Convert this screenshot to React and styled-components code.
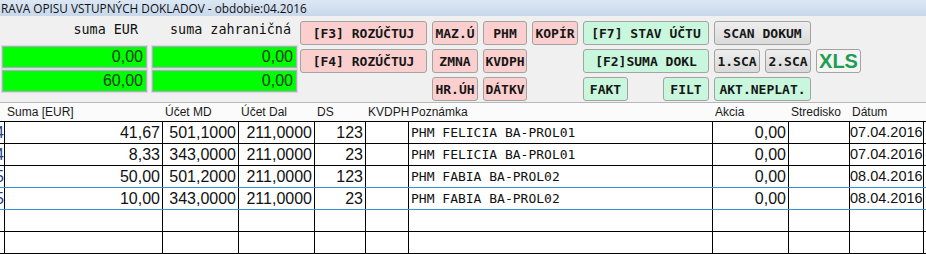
import React from 'react'
import styled, { createGlobalStyle } from 'styled-components'

const GlobalStyle = createGlobalStyle`
  html, body {
    margin: 0;
    padding: 0;
    background: #f0f0f0;
    overflow: hidden;
  }
`

const rows = [
  { id: '4', suma: '41,67', md: '501,1000', dal: '211,0000', ds: '123', note: 'PHM FELICIA BA-PROL01', akcia: '0,00', datum: '07.04.2016' },
  { id: '4', suma: '8,33', md: '343,0000', dal: '211,0000', ds: '23', note: 'PHM FELICIA BA-PROL01', akcia: '0,00', datum: '07.04.2016' },
  { id: '5', suma: '50,00', md: '501,2000', dal: '211,0000', ds: '123', note: 'PHM FABIA BA-PROL02', akcia: '0,00', datum: '08.04.2016', blue: true },
  { id: '5', suma: '10,00', md: '343,0000', dal: '211,0000', ds: '23', note: 'PHM FABIA BA-PROL02', akcia: '0,00', datum: '08.04.2016', blue: true },
  {},
  {},
]

const buttons = [
  { label: '[F3] ROZÚČTUJ', tone: 'pink', col: '1', row: 1 },
  { label: 'MAZ.Ú', tone: 'pink', col: '2', row: 1 },
  { label: 'PHM', tone: 'pink', col: '3', row: 1 },
  { label: 'KOPÍR', tone: 'pink', col: '4', row: 1 },
  { label: '[F7] STAV ÚČTU', tone: 'green', col: '5 / span 3', row: 1 },
  { label: 'SCAN DOKUM', tone: 'gray', col: '8 / span 2', row: 1 },
  { label: '[F4] ROZÚČTUJ', tone: 'pink', col: '1', row: 2 },
  { label: 'ZMNA', tone: 'pink', col: '2', row: 2 },
  { label: 'KVDPH', tone: 'pink', col: '3', row: 2 },
  { label: '[F2]SUMA DOKL', tone: 'green', col: '5 / span 3', row: 2 },
  { label: '1.SCA', tone: 'gray', col: '8', row: 2 },
  { label: '2.SCA', tone: 'gray', col: '9', row: 2 },
  { label: 'XLS', tone: 'xls', col: '10', row: 2 },
  { label: 'HR.ÚH', tone: 'pink', col: '2', row: 3 },
  { label: 'DÁTKV', tone: 'pink', col: '3', row: 3 },
  { label: 'FAKT', tone: 'green', col: '5', row: 3 },
  { label: 'FILT', tone: 'green', col: '7', row: 3 },
  { label: 'AKT.NEPLAT.', tone: 'green', col: '8 / span 2', row: 3 },
]

const tones = {
  pink: 'background: #fccfcf;',
  green: 'background: #c9f7dd;',
  gray: 'background: linear-gradient(#eeeeee, #dadada);',
  xls: `
    background: #f4f4f4;
    color: #1f9d50 !important;
    font-family: "Liberation Sans", Arial, sans-serif !important;
    font-size: 20px !important;
  `,
}

function App() {
  return (
    <Page>
      <GlobalStyle />
      <TitleBar>RAVA OPISU VSTUPNÝCH DOKLADOV - obdobie:04.2016</TitleBar>

      <Top>
        <Sums>
          <SumLabel $pad={9}>suma EUR</SumLabel>
          <SumLabel $pad={6}>suma zahraničná</SumLabel>
          <SumBox>0,00</SumBox>
          <SumBox>0,00</SumBox>
          <SumBox>60,00</SumBox>
          <SumBox>0,00</SumBox>
        </Sums>

        <Buttons>
          {buttons.map((b) => (
            <Btn key={b.label} $tone={b.tone} style={{ gridColumn: b.col, gridRow: b.row }}>
              {b.label}
            </Btn>
          ))}
        </Buttons>
      </Top>

      <Table>
        <HeadRow>
          <HeadCell />
          <HeadCell>Suma [EUR]</HeadCell>
          <HeadCell>Účet MD</HeadCell>
          <HeadCell>Účet Dal</HeadCell>
          <HeadCell>DS</HeadCell>
          <HeadCell>KVDPH</HeadCell>
          <HeadCell>Poznámka</HeadCell>
          <HeadCell>Akcia</HeadCell>
          <HeadCell>Stredisko</HeadCell>
          <HeadCell>Dátum</HeadCell>
        </HeadRow>

        <Body>
          {rows.map((r, i) => (
            <Row key={i} $blue={r.blue}>
              <IdCell><span>{r.id}</span></IdCell>
              <NumCell>{r.suma}</NumCell>
              <NumCell>{r.md}</NumCell>
              <NumCell>{r.dal}</NumCell>
              <NumCell>{r.ds}</NumCell>
              <Cell />
              <NoteCell>{r.note}</NoteCell>
              <NumCell>{r.akcia}</NumCell>
              <Cell />
              <DateCell>{r.datum}</DateCell>
            </Row>
          ))}
        </Body>
      </Table>
    </Page>
  )
}

export default App

const cols = '5px 158px 76px 76px 51px 43px 304px 76px 61px 74px'

const Page = styled.div`
  width: 926px;
  height: 254px;
  overflow: hidden;
  background: #f0f0f0;
`

const TitleBar = styled.div`
  height: 16px;
  line-height: 16px;
  padding-left: 1px;
  background: linear-gradient(#dce7f4, #c8d8eb);
  font-family: "Open Sans", "Noto Sans", sans-serif;
  font-size: 11.8px;
  color: #111;
  white-space: nowrap;
`

const Top = styled.div`
  display: flex;
  height: 81px;
  padding-top: 5px;
`

const Sums = styled.div`
  width: 298px;
  padding-left: 2px;
  display: grid;
  grid-template-columns: 145px 145px;
  grid-template-rows: 23px 22px 22px;
  column-gap: 5px;
  row-gap: 2px;
`

const SumLabel = styled.div`
  font-family: "DejaVu Sans Mono", monospace;
  font-size: 13.4px;
  line-height: 17px;
  text-align: right;
  padding-right: ${(p) => p.$pad}px;
  color: #111;
`

const SumBox = styled.div`
  box-sizing: border-box;
  background: #00ff00;
  border: 1px solid #b3a8c6;
  box-shadow: 0 0 0 1px #ddd6e6;
  font-family: "Liberation Sans", Arial, sans-serif;
  font-size: 16px;
  line-height: 20px;
  text-align: right;
  padding-right: 3px;
  color: #163816;
`

const Buttons = styled.div`
  display: grid;
  grid-template-columns: 127px 46px 44px 46px 45px 25px 46px 46px 46px 45px;
  grid-template-rows: 24px 24px 24px;
  column-gap: 5px;
  row-gap: 4px;
`

const Btn = styled.div`
  box-sizing: border-box;
  display: flex;
  align-items: center;
  justify-content: center;
  border: 1px solid #a3a3a3;
  border-radius: 3px;
  font-family: "DejaVu Sans Mono", monospace;
  font-weight: bold;
  font-size: 13px;
  color: #161616;
  white-space: nowrap;
  ${(p) => tones[p.$tone]}
`

const Table = styled.div`
  border-top: 1px solid #b8b8b8;
`

const HeadRow = styled.div`
  display: grid;
  grid-template-columns: ${cols};
  height: 18px;
  background: #fbfbfb;
`

const HeadCell = styled.div`
  font-family: "Liberation Sans", Arial, sans-serif;
  font-size: 12px;
  line-height: 18px;
  padding-left: 2px;
  color: #1a1a1a;
  white-space: nowrap;
`

const Body = styled.div`
  border-top: 1px solid #000;
  background: #fff;
`

const Row = styled.div`
  display: grid;
  grid-template-columns: ${cols};
  height: 22px;
  box-sizing: border-box;
  border-bottom: 1px solid ${(p) => (p.$blue ? '#3a8ee0' : '#000')};
`

const Cell = styled.div`
  box-sizing: border-box;
  border-right: 1px solid #000;
  overflow: hidden;
  white-space: nowrap;
`

const IdCell = styled(Cell)`
  display: flex;
  justify-content: flex-end;
  font-family: "Liberation Sans", Arial, sans-serif;
  font-size: 16px;
  line-height: 21px;
  color: #23408c;
  > span { flex-shrink: 0; }
`

const NumCell = styled(Cell)`
  font-family: "Liberation Sans", Arial, sans-serif;
  font-size: 16px;
  line-height: 21px;
  text-align: right;
  padding-right: 2px;
  color: #111;
`

const NoteCell = styled(Cell)`
  font-family: "DejaVu Sans Mono", monospace;
  font-size: 13px;
  line-height: 21px;
  padding-left: 2px;
  color: #111;
`

const DateCell = styled(Cell)`
  font-family: "Liberation Sans", Arial, sans-serif;
  font-size: 14.5px;
  line-height: 21px;
  padding-left: 0;
  color: #111;
`
